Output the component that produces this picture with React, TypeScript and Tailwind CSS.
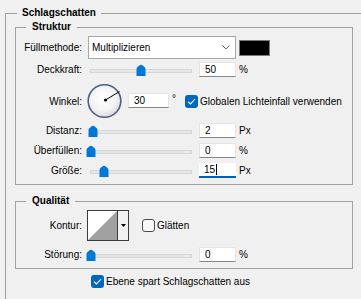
import React from 'react';

const Thumb = () => (
  <svg width="10" height="12" viewBox="0 0 10 12">
    <path d="M0.5 12V5Q0.5 3.6 1.8 2.7L4 1Q5 0.3 6 1L8.2 2.7Q9.5 3.6 9.5 5V12Z" fill="#0078d7" />
  </svg>
);

const Check = ({ checked }: { checked: boolean }) =>
  checked ? (
    <span className="flex h-[13px] w-[13px] shrink-0 items-center justify-center rounded-[3px] bg-[#0067c0]">
      <svg width="9" height="7" viewBox="0 0 9 7">
        <path d="M1 3.6L3.4 5.9L8 1.2" fill="none" stroke="#fff" strokeWidth="1.1" />
      </svg>
    </span>
  ) : (
    <span className="h-[13px] w-[13px] shrink-0 rounded-[3px] border border-[#4d4d4d] bg-[#f7f7f7]" />
  );

function Field({ value, focused, w = 'w-[37px]' }: { value: string; focused?: boolean; w?: string }) {
  return (
    <div
      className={`flex h-[15px] shrink-0 items-center bg-white pl-[5px] leading-none ${w} ${
        focused ? 'border-b-2 border-[#005fb8]' : 'border border-[#e5e5e5] border-b-[#868686]'
      }`}
    >
      {value}
      {focused && <span className="ml-px h-[11px] w-px bg-black" />}
    </div>
  );
}

function Slider({ pos }: { pos: string }) {
  return (
    <div className="relative ml-[2px] h-[15px] w-[111px] shrink-0">
      <div className="ml-[6px] mt-[7px] h-[4px] w-[102px] border border-[#d6d6d6] bg-[#e7e7e7]" />
      <div className={`absolute top-[2px] leading-none ${pos}`}>
        <Thumb />
      </div>
    </div>
  );
}

interface RowProps {
  label: string;
  value: string;
  unit: string;
  pos: string;
  focused?: boolean;
  mt: string;
}

function SliderRow({ label, value, unit, pos, focused, mt }: RowProps) {
  return (
    <div className={`flex h-[15px] items-center ${mt}`}>
      <span className="w-[66px] text-right">{label}</span>
      <Slider pos={pos} />
      <div className="ml-[4px]">
        <Field value={value} focused={focused} />
      </div>
      <span className="ml-[3px]">{unit}</span>
    </div>
  );
}

export default function App() {
  return (
    <div className="h-[299px] w-[361px] overflow-hidden bg-[#f0f0f0] pl-[5px] pt-[6px] font-['Liberation_Sans',Arial,sans-serif] text-[10px] text-black">
      <fieldset className="w-[400px] border border-[#a0a0a0] pb-[40px]">
        <legend className="ml-[11px] px-[5px] text-[10px] font-bold leading-[14px]">Schlagschatten</legend>

        {/* Struktur */}
        <fieldset className="ml-[9px] w-[338px] border border-[#a0a0a0] pb-[6px]">
          <legend className="ml-[10px] px-[6px] font-bold leading-[14px]">Struktur</legend>

          <div className="mt-[2px] flex h-[23px] items-center">
            <span className="w-[66px] text-right">Füllmethode:</span>
            <div className="ml-[6px] flex h-[23px] w-[148px] items-center justify-between border border-[#a8a8a8] bg-white pl-[3px] pr-[5px]">
              <span>Multiplizieren</span>
              <svg width="8" height="5" viewBox="0 0 8 5">
                <path d="M0.5 0.5L4 4L7.5 0.5" fill="none" stroke="#555" strokeWidth="0.9" />
              </svg>
            </div>
            <div className="ml-[3px] h-[16px] w-[31px] border border-[#7a7a7a] bg-black" />
          </div>

          <SliderRow label="Deckkraft:" value="50" unit="%" pos="left-[52px]" mt="mt-[3px]" />

          <div className="mt-[6px] flex h-[36px] items-center">
            <span className="w-[66px] text-right">Winkel:</span>
            <svg className="ml-[5px] shrink-0" width="35" height="36" viewBox="0 0 35 36">
              <defs>
                <radialGradient id="dial" cx="45%" cy="40%" r="60%">
                  <stop offset="0%" stopColor="#ffffff" />
                  <stop offset="70%" stopColor="#f2f2f2" />
                  <stop offset="100%" stopColor="#d9d9d9" />
                </radialGradient>
              </defs>
              <circle cx="17.5" cy="18" r="16.3" fill="url(#dial)" stroke="#4f5d85" strokeWidth="1.6" />
              <line x1="18.5" y1="17" x2="32.5" y2="8.5" stroke="#000" strokeWidth="1" />
              <circle cx="18.5" cy="17" r="1.6" fill="#000" />
            </svg>
            <div className="ml-[6px] self-start mt-[10px]">
              <Field value="30" w="w-[41px]" />
            </div>
            <span className="ml-[3px] self-start mt-[8px]">°</span>
            <div className="ml-[9px] flex items-center">
              <Check checked />
              <span className="ml-[2px]">Globalen Lichteinfall verwenden</span>
            </div>
          </div>

          <SliderRow label="Distanz:" value="2" unit="Px" pos="left-[4px]" mt="mt-[4px]" />
          <SliderRow label="Überfüllen:" value="0" unit="%" pos="left-[2px]" mt="mt-[5px]" />
          <SliderRow label="Größe:" value="15" unit="Px" pos="left-[15px]" focused mt="mt-[5px]" />
        </fieldset>

        {/* Qualität */}
        <fieldset className="ml-[9px] mt-[9px] w-[338px] border border-[#a0a0a0] pb-[6px]">
          <legend className="ml-[10px] px-[6px] font-bold leading-[14px]">Qualität</legend>

          <div className="mt-[2px] flex h-[31px] items-center">
            <span className="w-[66px] text-right">Kontur:</span>
            <div className="ml-[5px] flex h-[31px] w-[42px] border border-[#3c3c3c]">
              <svg width="29" height="29" viewBox="0 0 29 29" className="shrink-0 bg-white">
                <path d="M0 29L29 0V29Z" fill="#a0a0a0" />
              </svg>
              <div className="flex flex-1 justify-center border-l border-[#3c3c3c] bg-[#f0f0f0] pt-[13px]">
                <svg width="5" height="3" viewBox="0 0 5 3">
                  <path d="M0 0H5L2.5 3Z" fill="#000" />
                </svg>
              </div>
            </div>
            <div className="ml-[13px] flex items-center">
              <Check checked={false} />
              <span className="ml-[2px]">Glätten</span>
            </div>
          </div>

          <SliderRow label="Störung:" value="0" unit="%" pos="left-[2px]" mt="mt-[6px]" />
        </fieldset>

        <div className="mt-[6px] flex h-[13px] items-center pl-[85px]">
          <Check checked />
          <span className="ml-[2px]">Ebene spart Schlagschatten aus</span>
        </div>
      </fieldset>
    </div>
  );
}
